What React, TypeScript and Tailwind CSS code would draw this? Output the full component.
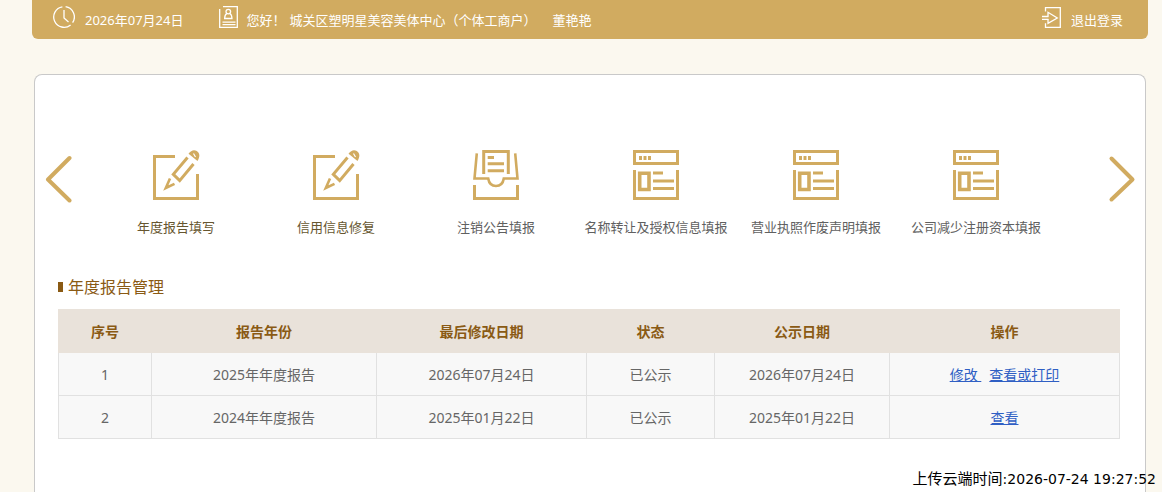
import type { ReactNode } from "react";

function ClockIcon() {
  return (
    <svg className="size-[22px] shrink-0" viewBox="0 0 22 22" fill="none" stroke="currentColor" strokeWidth="1.3" aria-hidden="true">
      <path d="M12.6.7A10.3 10.3 0 0 1 19.6 16.6M17.6 18.9A10.3 10.3 0 1 1 9.4.8" />
      <path d="M11 4v8l4.500 4" />
    </svg>
  );
}

function PersonCardIcon() {
  return (
    <svg className="h-[22px] w-5 shrink-0" viewBox="0 0 20 22" fill="none" stroke="currentColor" strokeWidth="1.3" aria-hidden="true">
      <path d="M5 .7h14.300v20.600H1.700V3" />
      <circle cx="10.300" cy="5.600" r="2.300" />
      <path d="M8.700 7.600c-1.500.8-2 2.500-2 4.700h7.200c0-2.200-.5-3.900-2-4.700M6 12.500h8.600" />
      <path d="M4.500 16.200h13M4.500 18.700h13" />
    </svg>
  );
}

function ExitIcon() {
  return (
    <svg className="h-[22px] w-5 shrink-0" viewBox="0 0 20 22" fill="none" stroke="currentColor" strokeWidth="1.3" aria-hidden="true">
      <path d="M4.500 5.500V1.700h14.800v19.600H4.500v-4" />
      <path d="M7 10.500V6.300L16.300 12 7 17.300v-4" />
      <path d="M1 10.500h6.500M1 13.300h6.500" />
    </svg>
  );
}

function EditIcon() {
  return (
    <svg className="h-[52px] w-12" viewBox="0 0 48 52" fill="none" stroke="currentColor" strokeWidth="3" aria-hidden="true">
      <path d="M23 7.500H2.500v42h43V25" />
      <path d="M35.500 8.500 21.300 25.300l6.400 6.300L41.500 15" />
      <path d="M18 29.500 13.800 39l8.700-4.200" strokeWidth="2.600" />
      <path d="M36.500 4.800C39 1.200 42 .2 44.800 2c3.100 2.200 3.400 5.600.7 10z" fill="currentColor" stroke="none" />
      <path d="m41.500 4.500 2 3.500" stroke="#fff" strokeWidth="1.200" />
    </svg>
  );
}

function TrayIcon() {
  return (
    <svg className="h-[52px] w-12" viewBox="0 0 48 52" fill="none" stroke="currentColor" strokeWidth="3" aria-hidden="true">
      <path d="M11.700 25V2.500h24.600V25" />
      <path d="M15.700 8.500H22M15.700 14.700H32M15.700 21.700H32" />
      <path d="M4.800 4.300 2.500 29.500h13.700c.8 4.800 3.800 7.500 7.800 7.500s7-2.700 7.800-7.500h13.700L43.200 4.300" strokeWidth="2.600" />
      <path d="M2.500 36v13.500h43V36" />
    </svg>
  );
}

function PageIcon() {
  return (
    <svg className="h-[52px] w-12" viewBox="0 0 48 52" fill="none" stroke="currentColor" strokeWidth="3" aria-hidden="true">
      <path d="M2.500 2.500h43v12h-43z" />
      <path d="M7 9h3M11.500 9h3M16 9h3" strokeWidth="4" />
      <path d="M2.500 21v28.500h43V21" />
      <path d="M7.700 24.200h9.300v16.300H7.700z" strokeWidth="3.600" />
      <path d="M21 24h10M21 32h21M21 39.500h21" />
    </svg>
  );
}

function Chevron({ d }: { d: string }) {
  return (
    <svg className="h-12 w-7" viewBox="0 0 28 48" fill="none" stroke="currentColor" strokeWidth="4" strokeLinecap="round" strokeLinejoin="round" aria-hidden="true">
      <path d={d} />
    </svg>
  );
}

const services: { label: string; icon: ReactNode; color: string }[] = [
  { label: "年度报告填写", icon: <EditIcon />, color: "text-[#665630]" },
  { label: "信用信息修复", icon: <EditIcon />, color: "text-[#665630]" },
  { label: "注销公告填报", icon: <TrayIcon />, color: "text-[#606060]" },
  { label: "名称转让及授权信息填报", icon: <PageIcon />, color: "text-[#606060]" },
  { label: "营业执照作废声明填报", icon: <PageIcon />, color: "text-[#606060]" },
  { label: "公司减少注册资本填报", icon: <PageIcon />, color: "text-[#606060]" },
];

const columns = [
  { title: "序号", width: "w-[93px]" },
  { title: "报告年份", width: "w-[225px]" },
  { title: "最后修改日期", width: "w-[210px]" },
  { title: "状态", width: "w-[128px]" },
  { title: "公示日期", width: "w-[175px]" },
  { title: "操作", width: "w-[230px]" },
];

const reports = [
  { year: "2025年年度报告", modified: "2026年07月24日", published: "2026年07月24日", actions: ["修改\u00a0", "查看或打印"] },
  { year: "2024年年度报告", modified: "2025年01月22日", published: "2025年01月22日", actions: ["查看"] },
];

function Cell({ children }: { children: ReactNode }) {
  return <td className="border border-[#e1e1e1] pt-[2px]">{children}</td>;
}

export default function App() {
  return (
    <div className="relative flex min-h-screen flex-col bg-[#fbf8ef] pr-[14px] pl-8 font-['Noto_Sans','Noto_Sans_CJK_SC',sans-serif]">
      <header className="flex h-[39px] items-center rounded-b-md bg-[#d1ab60] pr-[25px] pl-[21px] text-[13px] leading-5 whitespace-nowrap text-white">
        <div className="flex h-full items-start gap-[10px] pt-[6px]">
          <ClockIcon />
          <span className="pt-1">2026年07月24日</span>
        </div>
        <div className="ml-[34px] flex h-full items-start gap-[9px] pt-[6px]">
          <PersonCardIcon />
          <p className="flex pt-1">
            <span className="mr-1">您好！</span>
            <span className="mr-2">城关区塑明星美容美体中心（个体工商户）</span>
            <span className="ml-2">董艳艳</span>
          </p>
        </div>
        <a href="#logout" className="ml-auto flex h-full items-start gap-[10px] pt-[6px]">
          <ExitIcon />
          <span className="pt-1">退出登录</span>
        </a>
      </header>

      <main className="mt-[35px] mr-[2px] ml-[2px] flex-1 rounded-t-lg border border-b-0 border-[#c9c9c9] bg-white">
        <nav aria-label="业务" className="flex items-start pt-[74px] text-[#d1ab60]">
          <button type="button" aria-label="上一页" className="mt-[6px] w-[61px] shrink-0 pl-[10px]">
            <Chevron d="M24.500 3 3 24.500 24.500 45.500" />
          </button>
          <ul className="grid flex-1 grid-cols-6">
            {services.map((service) => (
              <li key={service.label}>
                <a href="#service" className="flex flex-col items-center gap-[14px]">
                  {service.icon}
                  <span className={`text-[13px] leading-6 whitespace-nowrap ${service.color}`}>{service.label}</span>
                </a>
              </li>
            ))}
          </ul>
          <button type="button" aria-label="下一页" className="mt-[6px] w-[89px] shrink-0 pl-[52px]">
            <Chevron d="M3.500 3.500 24.500 24.500 3.500 44.500" />
          </button>
        </nav>

        <section className="mt-9 mr-[25px] ml-[23px]">
          <h2 className="flex items-center gap-[5px] text-base leading-6 text-[#8a5a14]">
            <span className="h-[10px] w-[5px] bg-[#8a5a14]" />
            年度报告管理
          </h2>
          <table className="mt-[10px] w-full table-fixed border-collapse text-center text-sm leading-5 text-[#666666]">
            <thead>
              <tr className="h-[43px] bg-[#e9e2da] text-[#8a5a14]">
                {columns.map((column) => (
                  <th key={column.title} scope="col" className={`border border-[#e9e2da] pt-[2px] font-bold ${column.width}`}>
                    {column.title}
                  </th>
                ))}
              </tr>
            </thead>
            <tbody>
              {reports.map((report, index) => (
                <tr key={report.year} className="h-[43px] bg-[#f8f8f8]">
                  <Cell>{index + 1}</Cell>
                  <Cell>{report.year}</Cell>
                  <Cell>{report.modified}</Cell>
                  <Cell>已公示</Cell>
                  <Cell>{report.published}</Cell>
                  <Cell>
                    <div className="flex justify-center gap-2">
                      {report.actions.map((action) => (
                        <a key={action} href="#report" className="text-[#2f5fc4] underline">
                          {action}
                        </a>
                      ))}
                    </div>
                  </Cell>
                </tr>
              ))}
            </tbody>
          </table>
        </section>
      </main>

      <p className="absolute right-[6px] bottom-[3px] text-[15px] leading-5 text-black">
        上传云端时间
        <time className="font-['DejaVu_Sans',sans-serif] text-sm" dateTime="2026-07-24T19:27:52">
          :2026-07-24 19:27:52
        </time>
      </p>
    </div>
  );
}
